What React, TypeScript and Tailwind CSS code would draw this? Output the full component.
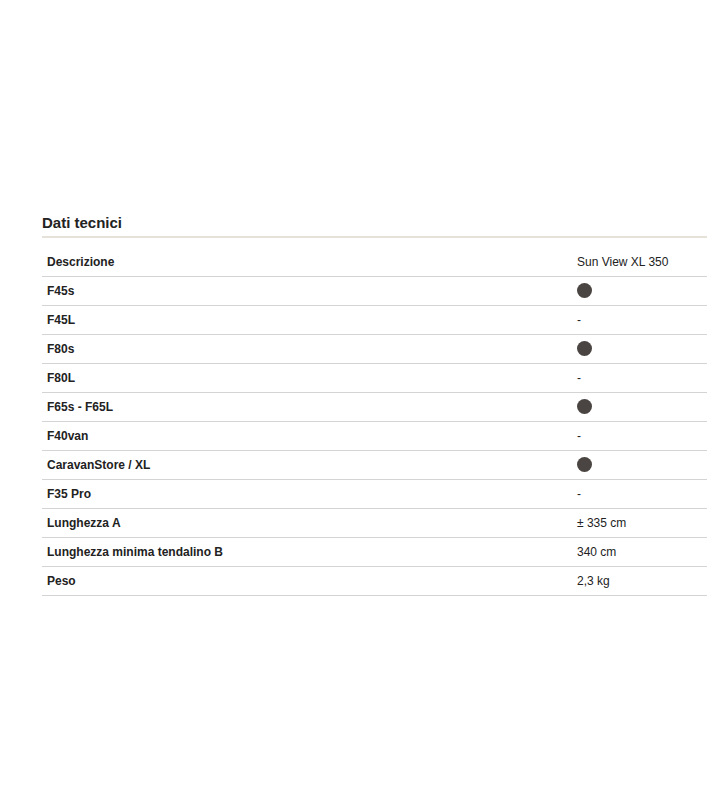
import React from "react";

const rows: [string, string | null][] = [
  ["F45s", null],
  ["F45L", "-"],
  ["F80s", null],
  ["F80L", "-"],
  ["F65s - F65L", null],
  ["F40van", "-"],
  ["CaravanStore / XL", null],
  ["F35 Pro", "-"],
  ["Lunghezza A", "± 335 cm"],
  ["Lunghezza minima tendalino B", "340 cm"],
  ["Peso", "2,3 kg"],
];

export default function App() {
  return (
    <div className="min-h-[800px] bg-white" style={{ fontFamily: '"Liberation Sans", Arial, sans-serif' }}>
      <div className="pt-[213px] pl-[42px] w-[707px]">
        <h2 className="text-[15px] leading-[20px] font-bold text-[#222] pb-[3px] border-b-2 border-[#e7e2d9]">
          Dati tecnici
        </h2>
        <div className="mt-[10px]">
          <div className="flex h-[29px] items-center border-b border-[#d4d4d4] text-[12px] text-[#222]">
            <div className="w-[530px] pl-[5px] font-bold">Descrizione</div>
            <div className="pl-[5px]">Sun View XL 350</div>
          </div>
          {rows.map(([k, v]) => (
            <div key={k} className="flex h-[29px] items-center border-b border-[#d4d4d4] text-[12px] text-[#222]">
              <div className="w-[530px] pl-[5px] font-bold">{k}</div>
              <div className="pl-[5px] flex items-center">
                {v === null ? (
                  <span className="block w-[15px] h-[15px] mb-[2px] rounded-full bg-[#4a4542]" />
                ) : (
                  v
                )}
              </div>
            </div>
          ))}
        </div>
      </div>
    </div>
  );
}
